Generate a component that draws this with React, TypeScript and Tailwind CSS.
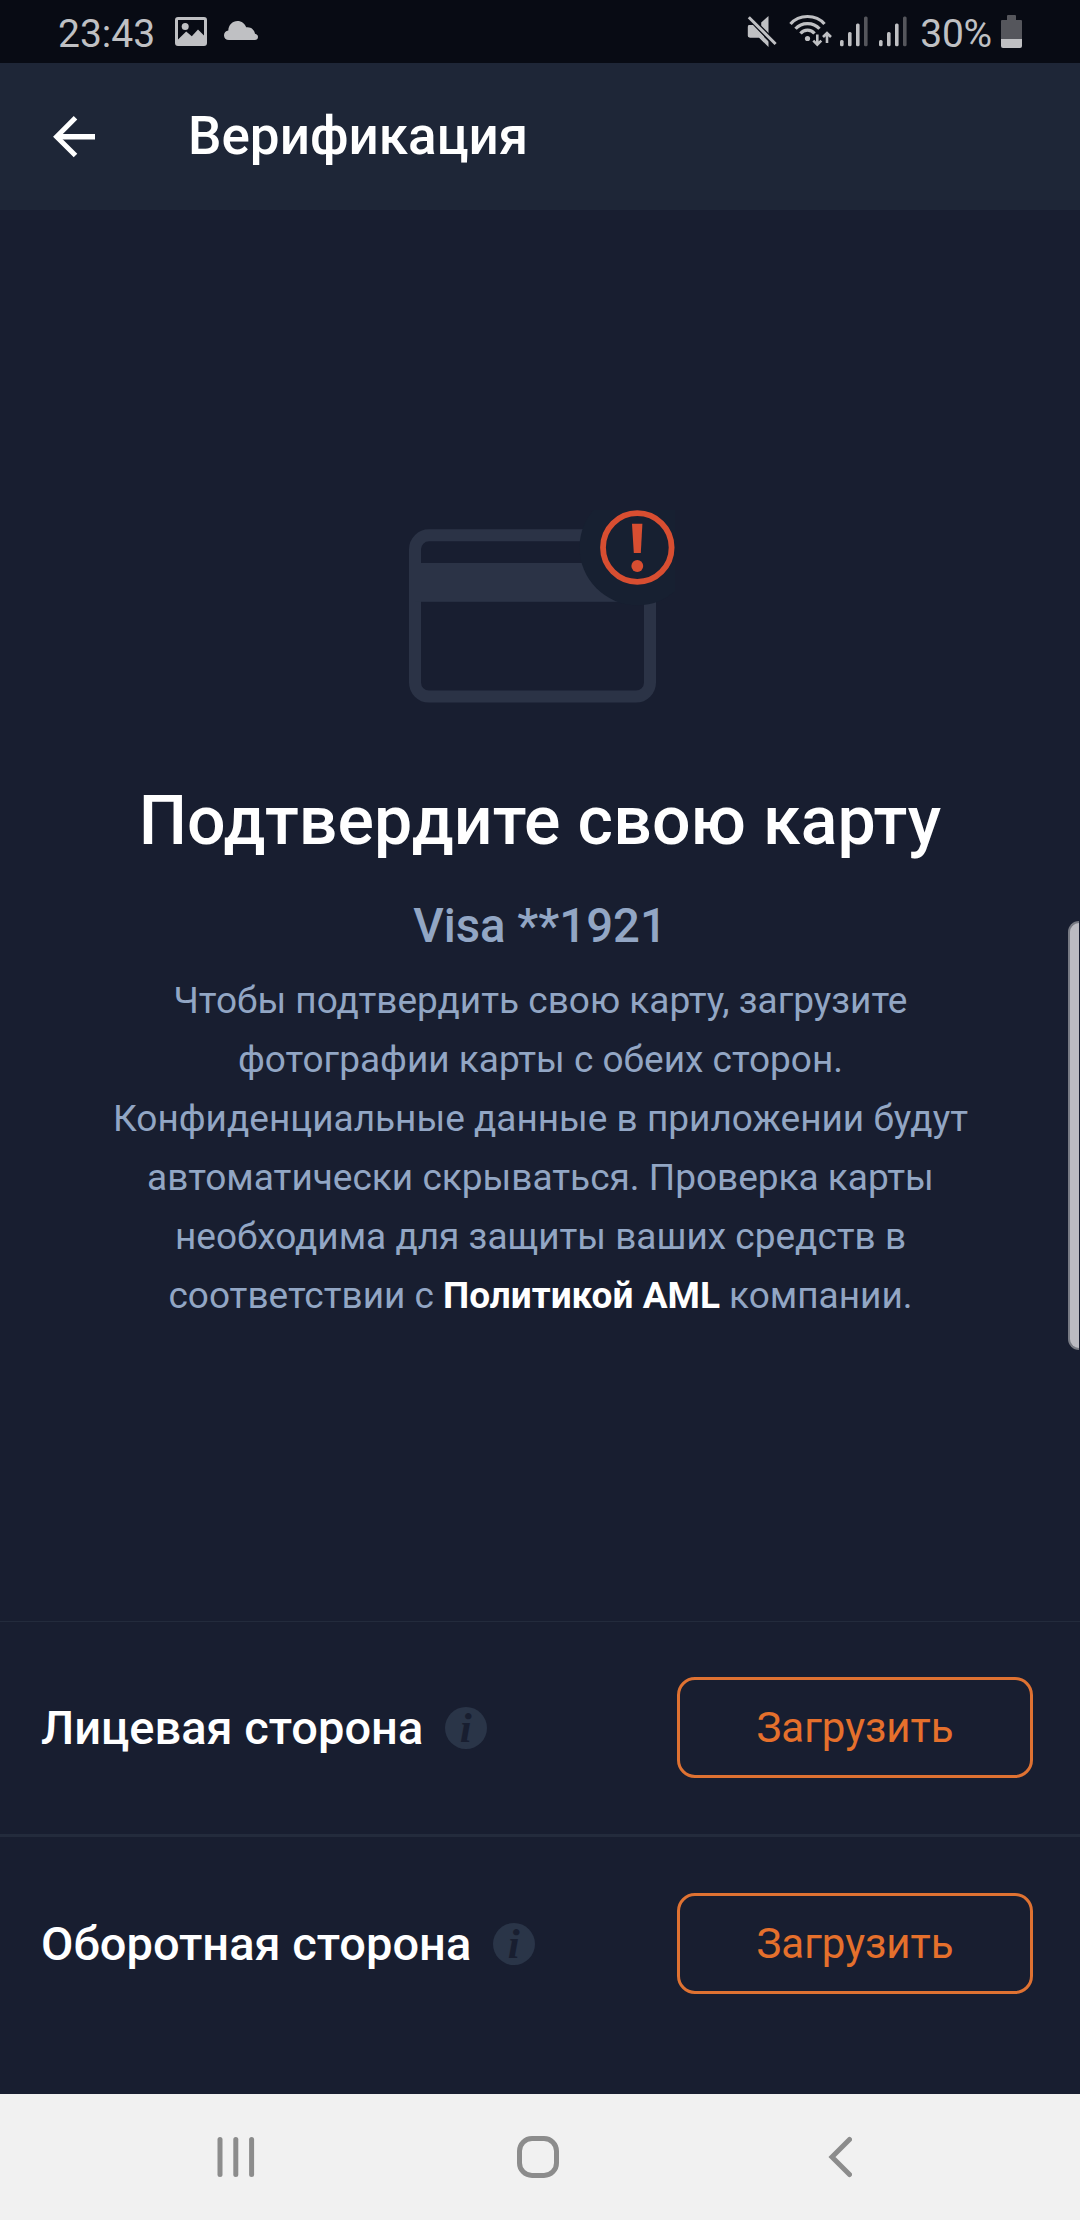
function NotificationIcons() {
  return (
    <svg className="ml-[20px] h-[63px] w-[84px]" viewBox="175 0 84 63" fill="#bfc0c3">
      <path
        fillRule="evenodd"
        d="M178 17h26a3 3 0 0 1 3 3v23a3 3 0 0 1-3 3h-26a3 3 0 0 1-3-3V20a3 3 0 0 1 3-3zM178 20v19.5l8.2-8 5.6 4.8 6.2-6.8 6 6V20z"
      />
      <circle cx="185.2" cy="26.5" r="3.5" />
      <path d="M229 40c-3.200 0-5-2-5-4.800 0-2.700 1.900-4.500 4.300-4.800.2-5.300 4.200-9.400 9.200-9.400 4 0 7.400 2.500 8.700 6.300 4.600-.8 8.300 2.300 8.800 6.500 2 .4 3 1.600 3 3.200 0 1.800-1.300 3-3.200 3z" />
    </svg>
  );
}

function ConnectionIcons() {
  return (
    <svg className="mr-[12px] h-[63px] w-[161px]" viewBox="747 0 161 63" fill="#bfc0c3">
      <path d="M749.500 25h7.500l11.500 11.500V47l-9.500-9.500h-9.500q-1.700 0-1.700-1.700v-9q0-1.800 1.700-1.800z" />
      <path d="M768.500 16v18.500l-7.300-8.300v-3.700z" />
      <path d="M748.800 17.500l26 26" stroke="#080b14" strokeWidth="6" />
      <path d="M748.800 17.200l26.800 26.800" stroke="#bfc0c3" strokeWidth="3" />
      <path d="M748 27v9l2 1.500h9l5 5v-6l-11-11.500h-3.500q-1.500 0-1.500 2z" />
      <g fill="none" stroke="#bfc0c3" strokeWidth="3.200">
        <path d="M790.500 24c8.500-10 25.500-10 34 0" />
        <path d="M795.500 28.800c6-7 18-7 24 0" />
        <path d="M800.500 33.500c3.500-4.400 10.500-4.400 14 0" />
        <path d="M817.300 34.500V45M813.300 40.700l4 4 4-4M827 43V33M823 37l4-4 4 4" strokeWidth="2.600" />
      </g>
      <circle cx="807.500" cy="38.500" r="2.600" />
      {[0, 39].map((dx) => (
        <g key={dx} transform={`translate(${dx} 0)`}>
          <rect x="840" y="40" width="3.600" height="6.300" rx="1.500" />
          <rect x="848" y="32" width="3.600" height="14.300" rx="1.500" />
          <rect x="856" y="23.500" width="3.600" height="22.800" rx="1.500" />
          <rect x="864" y="16.500" width="3.600" height="29.800" rx="1.500" fill="#55565c" />
        </g>
      ))}
    </svg>
  );
}

function BatteryIcon() {
  return (
    <svg className="ml-[9px] h-[63px] w-[21px]" viewBox="1001 0 21 63">
      <path d="M1007 20v-4q0-1 1-1h7q1 0 1 1v4h5q1 0 1 1v18h-21V21q0-1 1-1z" fill="#55565c" />
      <path d="M1001 39h21v7q0 2-2 2h-17q-2 0-2-2z" fill="#bfc0c3" />
    </svg>
  );
}

function CardAlert() {
  return (
    <svg className="h-[194px] w-[270px]" viewBox="405 510 270 194">
      <rect x="415" y="535.300" width="235" height="161.200" rx="14" fill="none" stroke="#2b3346" strokeWidth="12" />
      <rect x="415" y="563" width="235" height="38.800" fill="#2b3346" />
      <circle cx="637.300" cy="547.500" r="57.800" fill="#172031" />
      <circle cx="637.300" cy="547.500" r="34.300" fill="none" stroke="#d84e31" strokeWidth="5.800" />
      <path d="M632 523.800h10.400l-1.600 29.200h-7z" fill="#d84e31" />
      <circle cx="637.300" cy="566" r="5.900" fill="#d84e31" />
    </svg>
  );
}

function UploadRow({ label }: { label: string }) {
  return (
    <div className="flex h-[212px] items-center pr-[47px] pb-px pl-[41px]">
      <span className="text-[47px] leading-[56px] font-medium text-white">{label}</span>
      <span className="ml-[21.500px] flex size-[42px] items-center justify-center rounded-full bg-[#2a3548] font-['Liberation_Serif',serif] text-[43px] leading-[42px] font-bold text-[#181e30] italic">
        i
      </span>
      <button className="ml-auto h-[101px] w-[356px] rounded-[18px] border-[3px] border-[#df7232] text-[42px] leading-[50px] text-[#e5702c]">
        Загрузить
      </button>
    </div>
  );
}

export default function App() {
  return (
    <div className="relative flex h-[2220px] w-[1080px] flex-col overflow-hidden bg-[#181e30] font-[Roboto,sans-serif]">
      <div className="flex h-[63px] shrink-0 items-center bg-[#080b14] pr-[58px] pl-[58px] text-[39px] leading-[46px] text-[#bfc0c3]">
        <span className="pt-[5px]">23:43</span>
        <NotificationIcons />
        <div className="ml-auto flex items-center">
          <ConnectionIcons />
          <span className="pt-[5px] tracking-[-0.2px]">30%</span>
          <BatteryIcon />
        </div>
      </div>

      <header className="flex h-[147px] shrink-0 items-center bg-[#1e2637] pl-[53px]">
        <svg className="h-[42px] w-[42px]" viewBox="0 0 42 42" fill="none" stroke="#fff">
          <path d="M22.500 1.800L3.600 20.700l18.900 18.900" strokeWidth="5" />
          <path d="M5 20.700h37" strokeWidth="5.600" />
        </svg>
        <h1 className="ml-[93px] pb-[2px] text-[53px] leading-[62px] font-medium text-white">Верификация</h1>
      </header>

      <main className="flex h-[1411px] shrink-0 flex-col items-center pt-[300px] text-center">
        <CardAlert />
        <h2 className="mt-[77px] text-[68px] leading-[80px] font-medium tracking-[0.1px] text-white">
          Подтвердите свою карту
        </h2>
        <div className="mt-[37px] text-[47.300px] leading-[56px] font-medium text-[#92a6c4]">Visa **1921</div>
        <p className="mt-[17px] pl-px text-[37px] leading-[59px] whitespace-nowrap text-[#92a6c4]">
          Чтобы подтвердить свою карту, загрузите
          <br />
          фотографии карты с обеих сторон.
          <br />
          Конфиденциальные данные в приложении будут
          <br />
          автоматически скрываться. Проверка карты
          <br />
          необходима для защиты ваших средств в
          <br />
          соответствии с <b className="font-bold text-white">Политикой AML</b> компании.
        </p>
      </main>

      <section className="flex grow flex-col border-t border-[#232b3c]">
        <UploadRow label="Лицевая сторона" />
        <div className="mb-px h-[3px] bg-[#232b3c]" />
        <UploadRow label="Оборотная сторона" />
      </section>

      <nav className="flex h-[126px] shrink-0 items-center bg-[#f1f1f1] pl-[217px]">
        <svg className="h-[42px] w-[38px]" viewBox="0 0 38 42" fill="#8c8c8c">
          <rect x="0.500" y="1" width="5" height="40" rx="2.500" />
          <rect x="16.300" y="1" width="5" height="40" rx="2.500" />
          <rect x="32.100" y="1" width="5" height="40" rx="2.500" />
        </svg>
        <svg className="ml-[262px] h-[42px] w-[42px]" viewBox="0 0 42 42" fill="none" stroke="#8c8c8c">
          <rect x="2.500" y="2.500" width="37" height="37" rx="12.500" strokeWidth="5" />
        </svg>
        <svg className="ml-[269px] h-[42px] w-[24px]" viewBox="0 0 24 42" fill="none" stroke="#8c8c8c">
          <path d="M21.500 3.500L4 21l17.500 17.500" strokeWidth="5" strokeLinecap="round" />
        </svg>
      </nav>

      {/* Edge panel handle */}
      <div className="absolute top-[921px] right-px h-[429px] w-[11px] rounded-l-[14px] border-y-2 border-l-2 border-[#777a83] bg-[#bbbbc2]" />
    </div>
  );
}
